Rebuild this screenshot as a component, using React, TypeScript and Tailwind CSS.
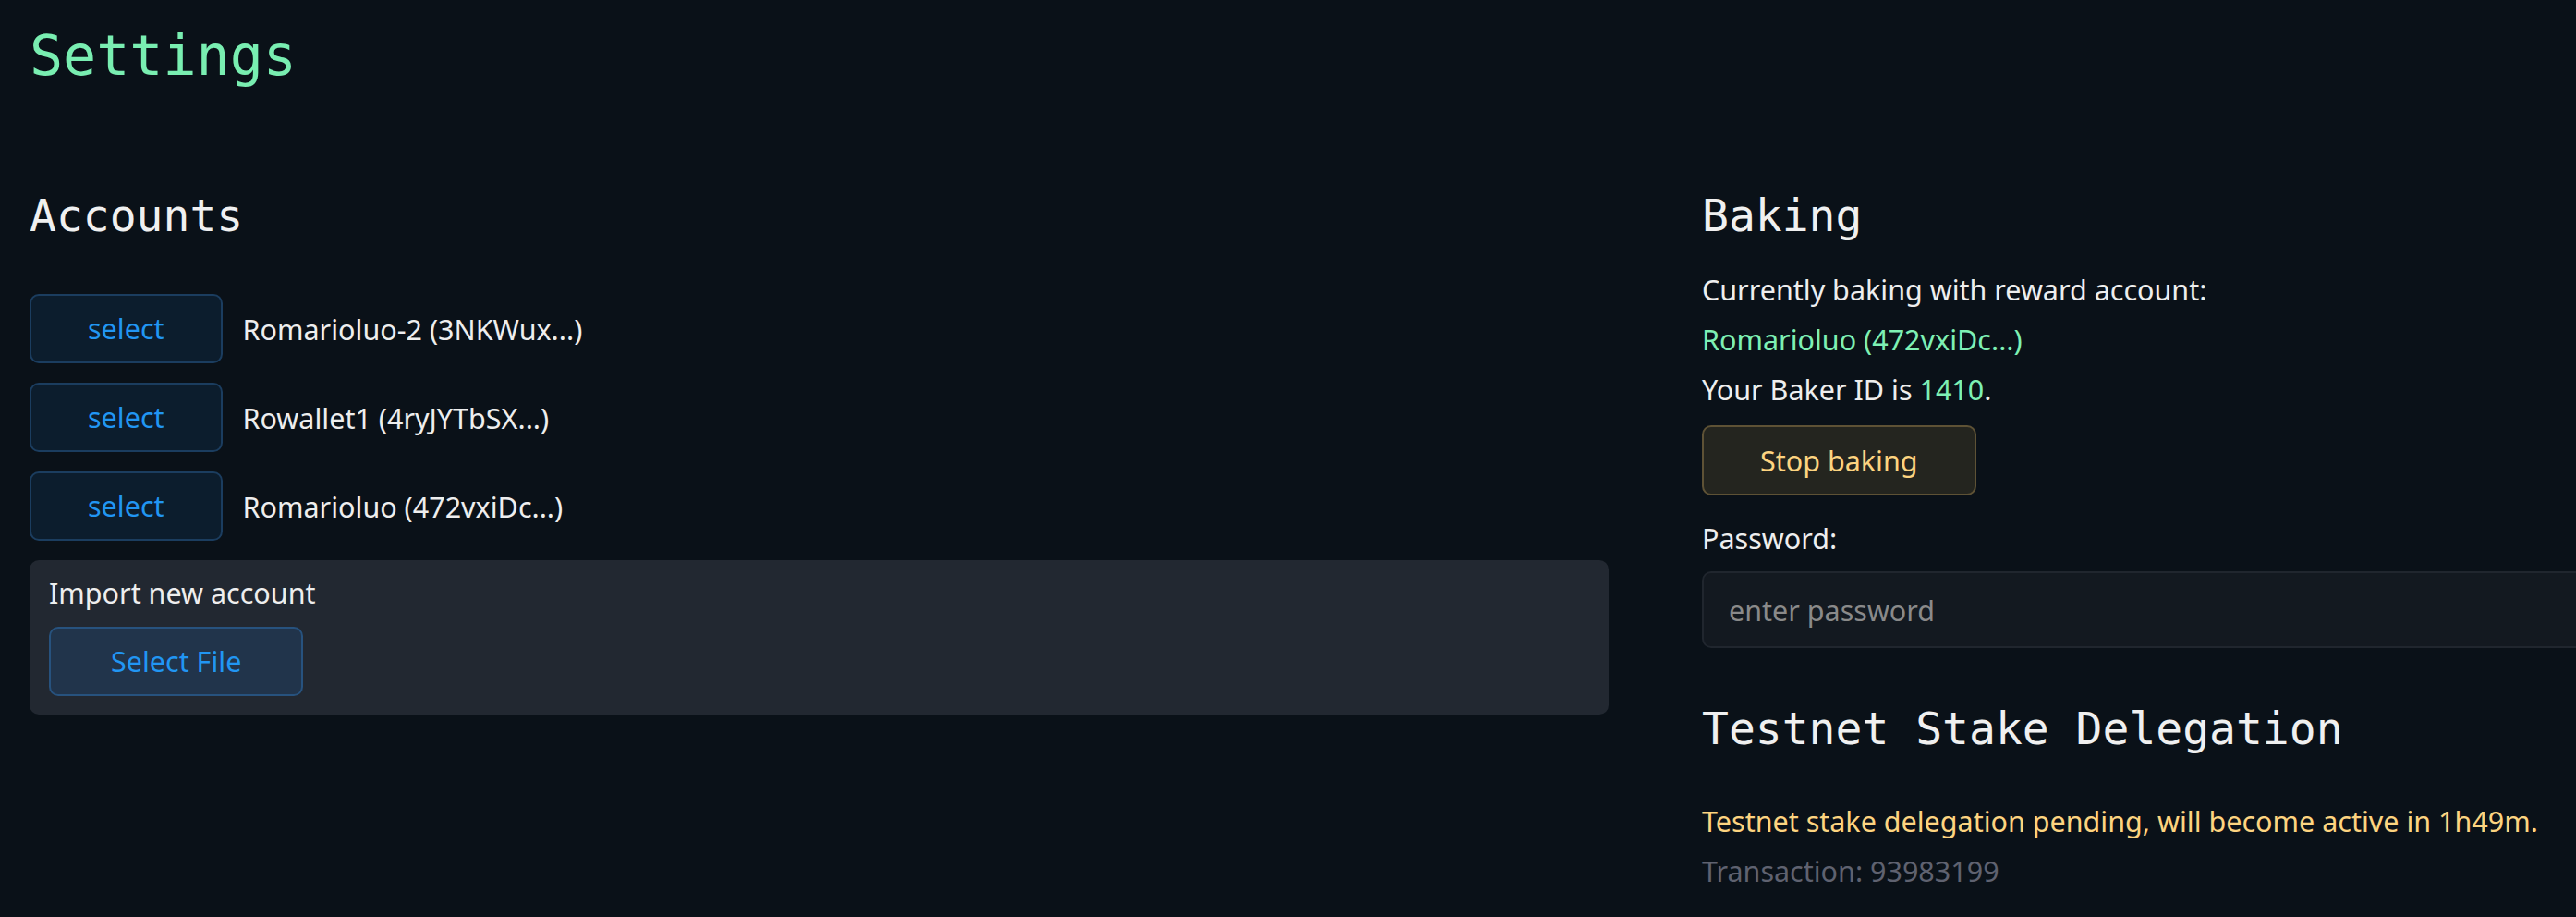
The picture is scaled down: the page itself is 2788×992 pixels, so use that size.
const accounts = [
  { name: "Romarioluo-2", addr: "3NKWux..." },
  { name: "Rowallet1", addr: "4ryJYTbSX..." },
  { name: "Romarioluo", addr: "472vxiDc..." },
];

const mono = "font-['DejaVu_Sans_Mono',monospace]";

const BlueButton = ({ label, light = false }: { label: string; light?: boolean }) => (
  <button
    className={`shrink-0 rounded-[10px] border-2 py-3 text-[30.5px] leading-[47px] text-[#2196f3] ${
      light ? "border-[#27527e] bg-[#21344b] px-[65px]" : "border-[#1b3d5f] bg-[#0c1d2d] px-[61px]"
    }`}
  >
    {label}
  </button>
);

export default function App() {
  return (
    <div className="h-[992px] w-[2788px] overflow-hidden bg-[#0a1118] font-['Noto_Sans',sans-serif] text-[30.5px] leading-[54px] text-[#eeeeee]">
      <div className="px-[32px] pt-[30px]">
        <h1 className={`${mono} text-[60px] leading-[60px] text-[#79eeb1]`}>Settings</h1>

        <div className="mt-[119px] flex gap-[101px]">
          {/* Accounts */}
          <section className="w-[1709px] shrink-0">
            <h2 className={`${mono} text-[48px] leading-[48px] text-[#f0f0f0]`}>Accounts</h2>
            <div className="mt-[61px] flex flex-col gap-[21px]">
              {accounts.map((a) => (
                <div key={a.name} className="flex items-center gap-[22px]">
                  <BlueButton label="select" />
                  <span>
                    {a.name} ({a.addr})
                  </span>
                </div>
              ))}
            </div>
            <div className="mt-[21px] rounded-[10px] bg-[#222831] px-[21px] pb-[20px] pt-[8px]">
              <div>Import new account</div>
              <div className="mt-[10px]">
                <BlueButton label="Select File" light />
              </div>
            </div>
          </section>

          {/* Baking */}
          <section className="w-[1709px] shrink-0">
            <h2 className={`${mono} text-[48px] leading-[48px] text-[#f0f0f0]`}>Baking</h2>
            <div className="mt-[29px]">
              <div>Currently baking with reward account:</div>
              <div className="text-[#7ef0b4]">Romarioluo (472vxiDc...)</div>
              <div>
                Your Baker ID is <span className="text-[#7ef0b4]">1410</span>.
              </div>
            </div>
            <button className="mt-[12px] rounded-[10px] border-2 border-[#5e5235] bg-[#24251f] px-[61px] py-3 text-[30.5px] leading-[48px] text-[#fdd480]">
              Stop baking
            </button>
            <div className="mt-[19px]">Password:</div>
            <input
              type="password"
              placeholder="enter password"
              className="mt-[9px] block h-[83px] w-full rounded-[10px] border-2 border-[#20262e] bg-[#131920] px-[27px] text-[30.5px] text-[#eeeeee] outline-none placeholder:text-[#8a8a8a]"
            />
            <h2 className={`${mono} mt-[63px] text-[48px] leading-[48px] text-[#f0f0f0]`}>
              Testnet Stake Delegation
            </h2>
            <div className="mt-[49px] text-[#fdd480]">
              Testnet stake delegation pending, will become active in 1h49m.
            </div>
            <div className="text-[#5f6270]">Transaction: 93983199</div>
          </section>
        </div>
      </div>
    </div>
  );
}
